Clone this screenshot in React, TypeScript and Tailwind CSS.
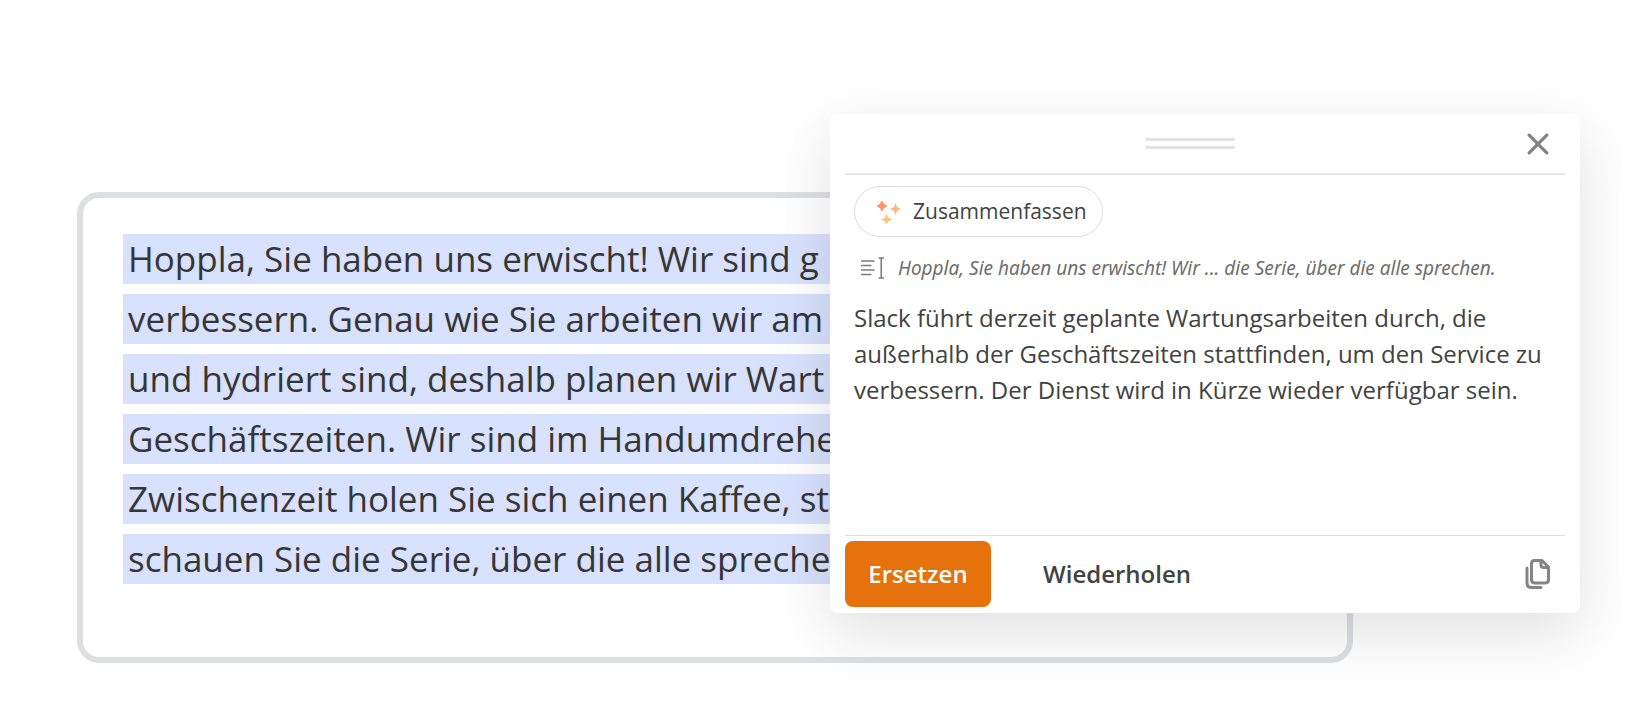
import React from "react";

const lines = [
  "Hoppla, Sie haben uns erwischt! Wir sind g",
  "verbessern. Genau wie Sie arbeiten wir am",
  "und hydriert sind, deshalb planen wir Wart",
  "Geschäftszeiten. Wir sind im Handumdrehe",
  "Zwischenzeit holen Sie sich einen Kaffee, st",
  "schauen Sie die Serie, über die alle spreche",
];

const SparkleIcon = () => (
  <svg width="24" height="24" viewBox="0 0 24 24" aria-hidden="true">
    <path d="M6 1Q7 5 11 6Q7 7 6 11Q5 7 1 6Q5 5 6 1Z" fill="#ff946a" stroke="#ff946a" />
    <path d="M19.5 5.5Q20.3 8.2 23 9Q20.3 9.8 19.5 12.5Q18.7 9.8 16 9Q18.7 8.2 19.5 5.5Z" fill="#ffb380" stroke="#ffb380" strokeWidth="1.5" />
    <path d="M10.5 16Q11.3 18.7 14 19.5Q11.3 20.3 10.5 23Q9.7 20.3 7 19.5Q9.7 18.7 10.5 16Z" fill="#ffc27a" stroke="#ffc27a" strokeWidth="1.5" />
  </svg>
);

const SelectionIcon = () => (
  <svg width="24" height="22" viewBox="0 0 24 22" fill="none" stroke="#7c7c7c" aria-hidden="true">
    <path d="M0 4H13.5M0 8.5H10.5M0 13H13.5M0 17.5H10.5" strokeWidth="1.6" />
    <path d="M17.5 1H23M17.5 21H23M20.25 1V21" strokeWidth="1.6" />
  </svg>
);

const CloseIcon = () => (
  <svg width="22" height="22" viewBox="0 0 22 22" fill="none" stroke="#828282" strokeWidth="3.2" strokeLinecap="round" aria-hidden="true">
    <path d="M2.2 2.2L19.8 19.8M19.8 2.2L2.2 19.8" />
  </svg>
);

const CopyIcon = () => (
  <svg width="26" height="32" viewBox="0 0 26 32" fill="none" stroke="#858585" strokeWidth="3" strokeLinecap="round" strokeLinejoin="round" aria-hidden="true">
    <path d="M9.5 2.5H17L23.5 9V21.5Q23.5 25 20 25H10Q6.5 25 6.5 21.5V6Q6.5 2.5 9.5 2.5Z" />
    <path d="M16 3V7Q16 9.5 18.5 9.5H23" />
    <path d="M2 10V25Q2 29.5 6.5 29.5H16" />
  </svg>
);

const App: React.FC = () => {
  return (
    <main className="relative min-h-screen overflow-hidden bg-white pt-48 pr-[297px] pb-16 pl-[77px] font-['Open_Sans',sans-serif]">
      <section className="rounded-[22px] border-[6px] border-[#dedfe3] pt-9 pb-[73px] pl-10">
        <p className="flex flex-col gap-2.5 text-[35px] leading-[50px] whitespace-nowrap text-[#363636]">
          {lines.map((line) => (
            <mark key={line} className="block h-[50px] w-4/5 bg-[#d8e1fd] pl-[5px] text-inherit">
              {line}
            </mark>
          ))}
        </p>
      </section>

      {/* floating assistant window */}
      <div
        role="dialog"
        aria-label="Zusammenfassen"
        className="absolute top-[114px] right-[70px] flex w-[750px] flex-col rounded-lg bg-white px-[15px] pb-1.5 text-[#424242] shadow-[0_20px_60px_rgba(0,0,0,0.12)]"
      >
        <header className="grid h-[61px] grid-cols-[1fr_90px_1fr] items-center border-b-2 border-[#e6e6e6] pr-[30px]">
          <span />
          <div className="flex flex-col gap-[5px]">
            <span className="h-[3px] rounded-full bg-[#e2e2e2]" />
            <span className="h-[3px] rounded-full bg-[#e2e2e2]" />
          </div>
          <button type="button" aria-label="Schließen" className="-mr-3.5 justify-self-end">
            <CloseIcon />
          </button>
        </header>

        <div className="flex h-[360px] flex-col items-start px-[9px] pt-[11px]">
          <button type="button" className="flex h-[51px] items-center gap-[13px] rounded-full border border-[#dedede] pr-[15px] pl-[21px] text-[21px]">
            <SparkleIcon />
            Zusammenfassen
          </button>
          <div className="mt-4 flex h-[30px] items-center gap-[13px] pl-[7px] font-['Noto_Sans',sans-serif] text-[19px] text-[#6e6e6e] italic">
            <SelectionIcon />
            <span>Hoppla, Sie haben uns erwischt! Wir ... die Serie, über die alle sprechen.</span>
          </div>
          <p className="mt-[17px] text-2xl leading-9">
            Slack führt derzeit geplante Wartungsarbeiten durch, die
            <br />
            außerhalb der Geschäftszeiten stattfinden, um den Service zu
            <br />
            verbessern. Der Dienst wird in Kürze wieder verfügbar sein.
          </p>
        </div>

        <footer className="flex items-center border-t border-[#dedede] pt-[5px] pr-[14px]">
          <button type="button" className="h-[66px] w-[146px] rounded-lg bg-[#e5720c] text-2xl font-semibold text-white">
            Ersetzen
          </button>
          <button type="button" className="ml-[52px] text-2xl font-semibold">
            Wiederholen
          </button>
          <button type="button" aria-label="Kopieren" className="ml-auto">
            <CopyIcon />
          </button>
        </footer>
      </div>
    </main>
  );
};

export default App;
